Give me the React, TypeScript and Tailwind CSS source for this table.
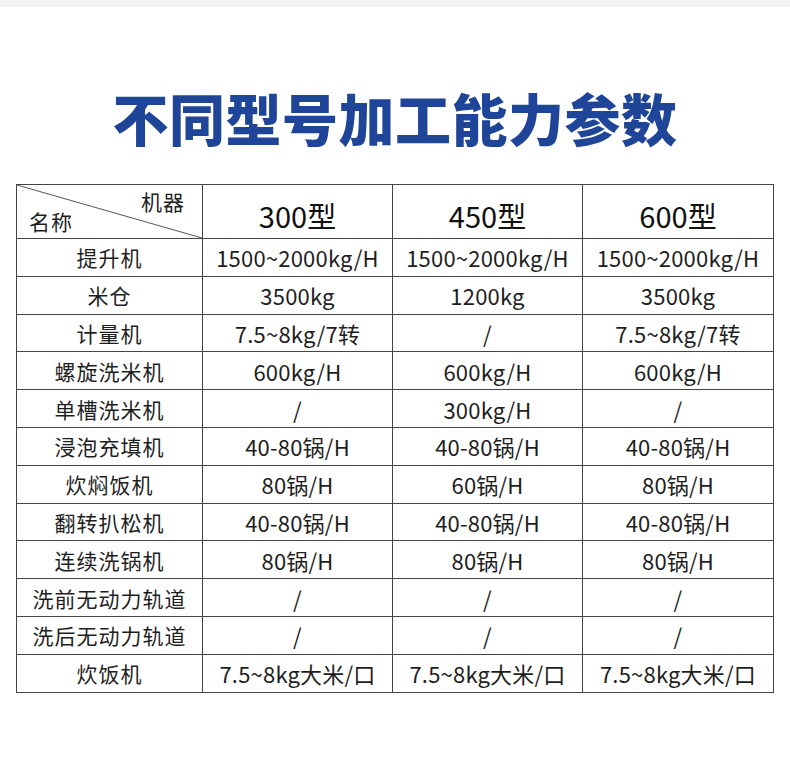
import React from "react";

const rows: [string, string, string, string][] = [
  ["提升机", "1500~2000kg/H", "1500~2000kg/H", "1500~2000kg/H"],
  ["米仓", "3500kg", "1200kg", "3500kg"],
  ["计量机", "7.5~8kg/7转", "/", "7.5~8kg/7转"],
  ["螺旋洗米机", "600kg/H", "600kg/H", "600kg/H"],
  ["单槽洗米机", "/", "300kg/H", "/"],
  ["浸泡充填机", "40-80锅/H", "40-80锅/H", "40-80锅/H"],
  ["炊焖饭机", "80锅/H", "60锅/H", "80锅/H"],
  ["翻转扒松机", "40-80锅/H", "40-80锅/H", "40-80锅/H"],
  ["连续洗锅机", "80锅/H", "80锅/H", "80锅/H"],
  ["洗前无动力轨道", "/", "/", "/"],
  ["洗后无动力轨道", "/", "/", "/"],
  ["炊饭机", "7.5~8kg大米/口", "7.5~8kg大米/口", "7.5~8kg大米/口"],
];

export default function App() {
  return (
    <div
      className="w-[790px] h-[758px] bg-white overflow-hidden"
      style={{ fontFamily: '"Noto Sans CJK SC", "Noto Sans", sans-serif' }}
    >
      <div className="h-[7px] bg-[#f3f3f3]" />
      <h1 className="mt-[82px] h-[56px] text-center text-[56px] leading-[56px] font-black text-[#1f4599] tracking-[0.5px]">
        不同型号加工能力参数
      </h1>
      <div className="mt-[39px] ml-[16px]">
        <table className="border-collapse table-fixed text-[#1e1e1e] w-[757px]">
          <colgroup>
            <col className="w-[186px]" />
            <col className="w-[190px]" />
            <col className="w-[190px]" />
            <col className="w-[191px]" />
          </colgroup>
          <thead>
            <tr className="h-[54px]">
              <th className="relative border border-[#444] p-0 font-normal">
                <svg className="absolute inset-0 w-full h-full" viewBox="0 0 185 54" preserveAspectRatio="none">
                  <line x1="0" y1="0" x2="185" y2="54" stroke="#555" strokeWidth="1" />
                </svg>
                <span className="absolute right-[17px] top-[3px] text-[21px] leading-[26px] tracking-[1px]">机器</span>
                <span className="absolute left-[12px] bottom-[4px] text-[21px] leading-[26px] tracking-[1px]">名称</span>
              </th>
              {["300型", "450型", "600型"].map((h) => (
                <th key={h} className="border border-[#444] p-0 text-[29px] leading-[34px] font-normal text-[#111] pt-[6px]">
                  {h}
                </th>
              ))}
            </tr>
          </thead>
          <tbody>
            {rows.map((r, i) => (
              <tr key={i} className="h-[37.8px]">
                {r.map((c, j) => (
                  <td
                    key={j}
                    className={`border border-[#444] p-0 text-center leading-[26px] whitespace-nowrap ${j === 0 ? "text-[21px] tracking-[1px]" : "text-[22px] tracking-[0.2px]"}`}
                  >
                    {c}
                  </td>
                ))}
              </tr>
            ))}
          </tbody>
        </table>
      </div>
    </div>
  );
}
